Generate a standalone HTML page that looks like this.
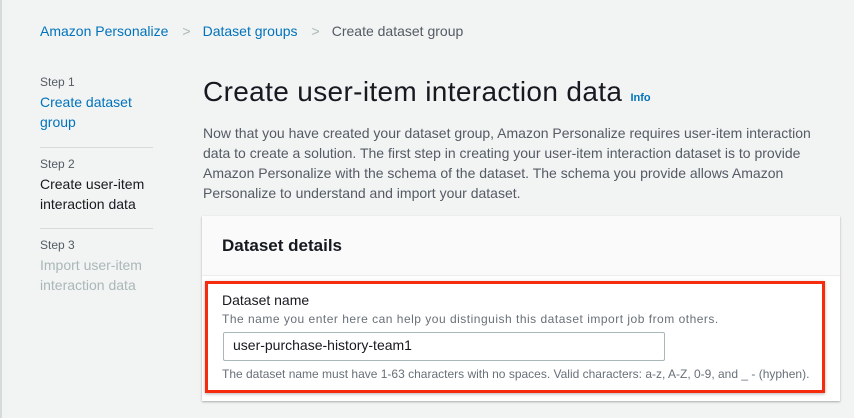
<!DOCTYPE html>
<html><head><style>
body{margin:0;width:854px;height:418px;background:#f2f3f3;font-family:"Liberation Sans",sans-serif;position:relative;overflow:hidden;color:#16191f}
.a{position:absolute;white-space:nowrap}
.lnk{color:#0073bb}
.step{font-size:12px;color:#545b64}
.st{font-size:14px;line-height:20px}
.hr{position:absolute;left:40px;width:113px;height:1px;background:#d5dbdb}
</style></head><body>
<div class="a" style="left:0;top:0;width:2px;height:418px;background:#d5dbdb"></div>
<div class="a" style="left:40px;top:23px;font-size:14px"><span class="lnk">Amazon Personalize</span><span style="color:#aab7b8;margin:0 12px 0 14px">&gt;</span><span class="lnk">Dataset groups</span><span style="color:#aab7b8;margin:0 12px 0 14px">&gt;</span><span style="color:#545b64">Create dataset group</span></div>
<div class="a step" style="left:40px;top:75px">Step 1</div>
<div class="a st lnk" style="left:40px;top:92px">Create dataset<br>group</div>
<div class="hr" style="top:147px"></div>
<div class="a step" style="left:40px;top:157px">Step 2</div>
<div class="a st" style="left:40px;top:174px">Create user-item<br>interaction data</div>
<div class="hr" style="top:228px"></div>
<div class="a step" style="left:40px;top:238px">Step 3</div>
<div class="a st" style="left:40px;top:255px;color:#aab7b8">Import user-item<br>interaction data</div>
<div class="a" style="left:203px;top:76px;font-size:28px;letter-spacing:0.35px;color:#16191f">Create user-item interaction data <span class="lnk" style="font-size:11px;font-weight:bold;letter-spacing:0">Info</span></div>
<div class="a" style="left:203px;top:123px;font-size:14px;line-height:20px;color:#545b64;white-space:normal;width:630px">Now that you have created your dataset group, Amazon Personalize requires user-item interaction data to create a solution. The first step in creating your user-item interaction dataset is to provide Amazon Personalize with the schema of the dataset. The schema you provide allows Amazon Personalize to understand and import your dataset.</div>
<div class="a" style="left:202px;top:216px;width:638px;height:185px;background:#fff;box-shadow:0 1px 2px rgba(0,0,0,.3)">
<div style="height:59px;background:#fafafa;border-bottom:1px solid #eaeded"></div>
</div>
<div class="a" style="left:222px;top:236px;font-size:17px;font-weight:bold">Dataset details</div>
<div class="a" style="left:205px;top:281px;width:614px;height:106px;border:3px solid #f72c0e;box-shadow:0 1px 3px rgba(0,0,0,.3)"></div>
<div class="a" style="left:222px;top:292px;font-size:14px">Dataset name</div>
<div class="a" style="left:222px;top:312px;font-size:12px;letter-spacing:0.5px;color:#687078">The name you enter here can help you distinguish this dataset import job from others.</div>
<div class="a" style="left:223px;top:332px;width:440px;height:27px;border:1px solid #aab7b8;border-radius:2px;background:#fff"></div>
<div class="a" style="left:233px;top:337px;font-size:14px">user-purchase-history-team1</div>
<div class="a" style="left:222px;top:367px;font-size:12px;color:#687078">The dataset name must have 1-63 characters with no spaces. Valid characters: a-z, A-Z, 0-9, and _ - (hyphen).</div>
</body></html>
